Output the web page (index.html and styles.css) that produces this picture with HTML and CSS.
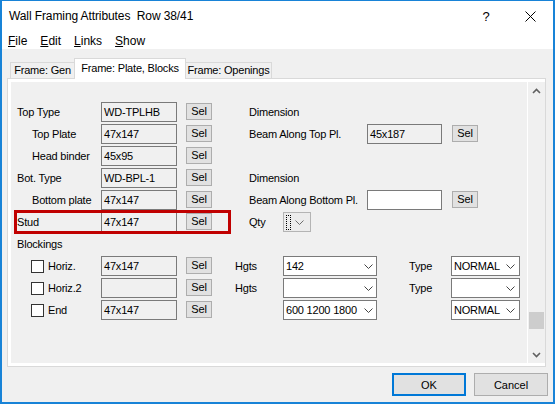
FILE: index.html
```html
<!DOCTYPE html>
<html>
<head>
<meta charset="utf-8">
<link rel="stylesheet" href="styles.css">
</head>
<body>
<div class="window">
  <div class="titlebar">
    <span class="title">Wall Framing Attributes&nbsp; Row 38/41</span>
    <span class="help">?</span>
    <span class="close"><svg width="11" height="11" viewBox="0 0 11 11"><path d="M0.5 0.5L10.5 10.5M10.5 0.5L0.5 10.5" stroke="#000" stroke-width="1" fill="none"/></svg></span>
  </div>
  <div class="menubar">
    <span><u>F</u>ile</span><span><u>E</u>dit</span><span><u>L</u>inks</span><span><u>S</u>how</span>
  </div>
  <div class="client">
    <div class="tabs">
      <div class="tab tab-gen">Frame: Gen</div>
      <div class="tab active tab-plate">Frame: Plate, Blocks</div>
      <div class="tab tab-open">Frame: Openings</div>
    </div>
    <div class="page">
      <div class="scrollarea">
        <div class="form">
          <div class="row">
            <span class="lbl">Top Type</span>
            <div class="tb">WD-TPLHB</div>
            <button class="sel">Sel</button>
            <span class="rlbl">Dimension</span>
          </div>
          <div class="row">
            <span class="sub">Top Plate</span>
            <div class="tb">47x147</div>
            <button class="sel">Sel</button>
            <span class="rlbl">Beam Along Top Pl.</span>
            <div class="tb rtb">45x187</div>
            <button class="sel rsel">Sel</button>
          </div>
          <div class="row">
            <span class="sub">Head binder</span>
            <div class="tb">45x95</div>
            <button class="sel">Sel</button>
          </div>
          <div class="row">
            <span class="lbl">Bot. Type</span>
            <div class="tb">WD-BPL-1</div>
            <button class="sel">Sel</button>
            <span class="rlbl">Dimension</span>
          </div>
          <div class="row">
            <span class="sub">Bottom plate</span>
            <div class="tb">47x147</div>
            <button class="sel">Sel</button>
            <span class="rlbl">Beam Along Bottom Pl.</span>
            <div class="tb rtb editable"></div>
            <button class="sel rsel">Sel</button>
          </div>
          <div class="row">
            <span class="lbl">Stud</span>
            <div class="tb">47x147</div>
            <button class="sel">Sel</button>
            <span class="qty">Qty</span>
            <div class="combo qcombo disabled"><span class="focus"></span><svg class="chev" width="9" height="5" viewBox="0 0 9 5"><path d="M0.5 0.5L4.5 4.5L8.5 0.5" fill="none" stroke="#6d6d6d" stroke-width="1"/></svg></div>
            <div class="hl"></div>
          </div>
          <div class="row">
            <span class="lbl">Blockings</span>
          </div>
          <div class="row">
            <span class="chk"></span>
            <span class="chklbl">Horiz.</span>
            <div class="tb">47x147</div>
            <button class="sel">Sel</button>
            <span class="hgts">Hgts</span>
            <div class="combo hcombo"><span class="val">142</span><svg class="chev" width="9" height="5" viewBox="0 0 9 5"><path d="M0.5 0.5L4.5 4.5L8.5 0.5" fill="none" stroke="#444" stroke-width="1"/></svg></div>
            <span class="type">Type</span>
            <div class="combo tcombo"><span class="val">NORMAL</span><svg class="chev" width="9" height="5" viewBox="0 0 9 5"><path d="M0.5 0.5L4.5 4.5L8.5 0.5" fill="none" stroke="#444" stroke-width="1"/></svg></div>
          </div>
          <div class="row">
            <span class="chk"></span>
            <span class="chklbl">Horiz.2</span>
            <div class="tb"></div>
            <button class="sel">Sel</button>
            <span class="hgts">Hgts</span>
            <div class="combo hcombo"><span class="val"></span><svg class="chev" width="9" height="5" viewBox="0 0 9 5"><path d="M0.5 0.5L4.5 4.5L8.5 0.5" fill="none" stroke="#444" stroke-width="1"/></svg></div>
            <span class="type">Type</span>
            <div class="combo tcombo"><span class="val"></span><svg class="chev" width="9" height="5" viewBox="0 0 9 5"><path d="M0.5 0.5L4.5 4.5L8.5 0.5" fill="none" stroke="#444" stroke-width="1"/></svg></div>
          </div>
          <div class="row">
            <span class="chk"></span>
            <span class="chklbl">End</span>
            <div class="tb">47x147</div>
            <button class="sel">Sel</button>
            <div class="combo hcombo"><span class="val">600 1200 1800</span><svg class="chev" width="9" height="5" viewBox="0 0 9 5"><path d="M0.5 0.5L4.5 4.5L8.5 0.5" fill="none" stroke="#444" stroke-width="1"/></svg></div>
            <div class="combo tcombo"><span class="val">NORMAL</span><svg class="chev" width="9" height="5" viewBox="0 0 9 5"><path d="M0.5 0.5L4.5 4.5L8.5 0.5" fill="none" stroke="#444" stroke-width="1"/></svg></div>
          </div>
        </div>
        <div class="scrollbar">
          <div class="arrow"><svg width="9" height="6" viewBox="0 0 9 6"><path d="M1 5L4.5 1.5L8 5" fill="none" stroke="#606060" stroke-width="1.6"/></svg></div>
          <div class="track"><div class="thumb"></div></div>
          <div class="arrow"><svg width="9" height="6" viewBox="0 0 9 6"><path d="M1 1L4.5 4.5L8 1" fill="none" stroke="#606060" stroke-width="1.6"/></svg></div>
        </div>
      </div>
    </div>
    <div class="buttons">
      <button class="btn default">OK</button>
      <button class="btn">Cancel</button>
    </div>
  </div>
</div>
</body>
</html>
```
FILE: styles.css
```css
* { box-sizing: border-box; }
html, body { margin: 0; padding: 0; }
body {
  width: 555px;
  height: 404px;
  overflow: hidden;
  background: #fff;
  font-family: "Liberation Sans", Arial, sans-serif;
  color: #000;
}
.window {
  width: 555px;
  height: 404px;
  border: solid #1883d7;
  border-width: 1px 2px 2px 2px;
  display: flex;
  flex-direction: column;
  background: #f0f0f0;
}
.titlebar {
  height: 30px;
  flex: none;
  background: #fff;
  display: flex;
  align-items: center;
  font-size: 12px;
}
.title { flex: 1; padding-left: 7px; letter-spacing: -0.1px; }
.help { width: 44px; text-align: center; font-size: 13px; }
.close { width: 45px; display: flex; justify-content: center; }
.menubar {
  height: 18px;
  flex: none;
  background: #fff;
  display: flex;
  padding: 2px 0 0 6px;
  font-size: 12px;
  line-height: 16px;
}
.menubar span { margin-right: 13px; }
.client {
  flex: 1;
  display: flex;
  flex-direction: column;
  padding: 9px 5px 0 5px;
}
.tabs {
  display: flex;
  align-items: flex-end;
  height: 21px;
  padding-left: 3px;
  margin-bottom: -1px;
  position: relative;
  z-index: 1;
  font-size: 11px;
  letter-spacing: -0.2px;
}
.tab {
  height: 16px;
  margin-bottom: 1px;
  border: 1px solid #d9d9d9;
  border-bottom: none;
  background: #f0f0f0;
  text-align: center;
  line-height: 15px;
  white-space: nowrap;
}
.tab.active {
  height: 21px;
  margin-bottom: 0;
  background: #fff;
  line-height: 19px;
}
.tab-gen { width: 64px; border-right: none; }
.tab-plate { width: 112px; }
.tab-open { width: 86px; border-left: none; }
.page {
  height: 289px;
  margin-right: 2px;
  border: 1px solid #d9d9d9;
  background: #fff;
  padding: 3px 0 3px 3px;
  display: flex;
}
.scrollarea {
  flex: 1;
  display: flex;
  background: #f0f0f0;
}
.form {
  flex: 1;
  padding: 20px 0 0 6px;
  font-size: 11px;
  letter-spacing: -0.2px;
}
.row {
  display: grid;
  grid-template-columns: 14px 17px 53px 85px 49px 14px 34px 84px 42px 42px 69px 1fr;
  height: 20px;
  margin-bottom: 2px;
}
.row > * { grid-row: 1; }
.lbl { grid-column: 1 / 4; align-self: center; white-space: nowrap; }
.sub { grid-column: 2 / 4; align-self: center; padding-left: 1px; white-space: nowrap; }
.rlbl { grid-column: 7 / 9; align-self: center; white-space: nowrap; }
.qty { grid-column: 7; align-self: center; }
.hgts { grid-column: 6 / 8; align-self: center; }
.type { grid-column: 10; align-self: center; }
.chklbl { grid-column: 3; align-self: center; }
.chk {
  grid-column: 2;
  align-self: center;
  width: 13px;
  height: 13px;
  border: 1px solid #333;
  background: #fff;
}
.tb {
  grid-column: 4;
  width: 76px;
  border: 1px solid #7a7a7a;
  background: #f0f0f0;
  padding-left: 2px;
  line-height: 18px;
  white-space: nowrap;
}
.tb.rtb { grid-column: 9 / 11; width: 75px; }
.tb.editable { background: #fff; }
.sel {
  grid-column: 5;
  align-self: start;
  width: 26px;
  height: 17px;
  margin-top: 1px;
  padding: 0;
  border: 1px solid #adadad;
  background: #e1e1e1;
  font: inherit;
  letter-spacing: -0.2px;
  line-height: 15px;
  color: #000;
}
.sel.rsel { grid-column: 11; margin-left: 1px; }
.combo {
  display: flex;
  align-items: center;
  border: 1px solid #7a7a7a;
  background: #fff;
}
.combo .val { flex: 1; padding-left: 2px; white-space: nowrap; overflow: hidden; }
.combo .chev { flex: none; margin-right: 3px; }
.hcombo { grid-column: 8 / 10; width: 94px; }
.tcombo { grid-column: 11; width: 69px; }
.tcombo .chev { margin-right: 4px; }
.qcombo {
  grid-column: 8;
  width: 28px;
  border-color: #b4b4b4;
  background: #ececec;
}
.qcombo .focus {
  width: 5px;
  height: 15px;
  margin-left: 2px;
  margin-right: auto;
  border: 1px dotted #000;
}
.qcombo .chev { margin-right: 6px; }
.hl {
  grid-column: 1 / 6;
  margin: -2px 4px -2px -3px;
  border: 3px solid #c00000;
}
.scrollbar {
  width: 18px;
  flex: none;
  border-left: 1px solid #fff;
  display: flex;
  flex-direction: column;
  background: #f0f0f0;
}
.arrow {
  height: 17px;
  flex: none;
  display: flex;
  align-items: center;
  justify-content: center;
}
.track { flex: 1; }
.thumb {
  width: 15px;
  height: 17px;
  margin: 213px 0 0 1px;
  background: #cdcdcd;
}
.buttons {
  display: flex;
  justify-content: flex-end;
  gap: 8px;
  margin-top: 6px;
}
.btn {
  width: 74px;
  height: 23px;
  padding: 0;
  border: 1px solid #adadad;
  background: #e1e1e1;
  font-family: "Liberation Sans", Arial, sans-serif;
  font-size: 11px;
  color: #000;
}
.btn.default { border: 2px solid #0078d7; }
```
